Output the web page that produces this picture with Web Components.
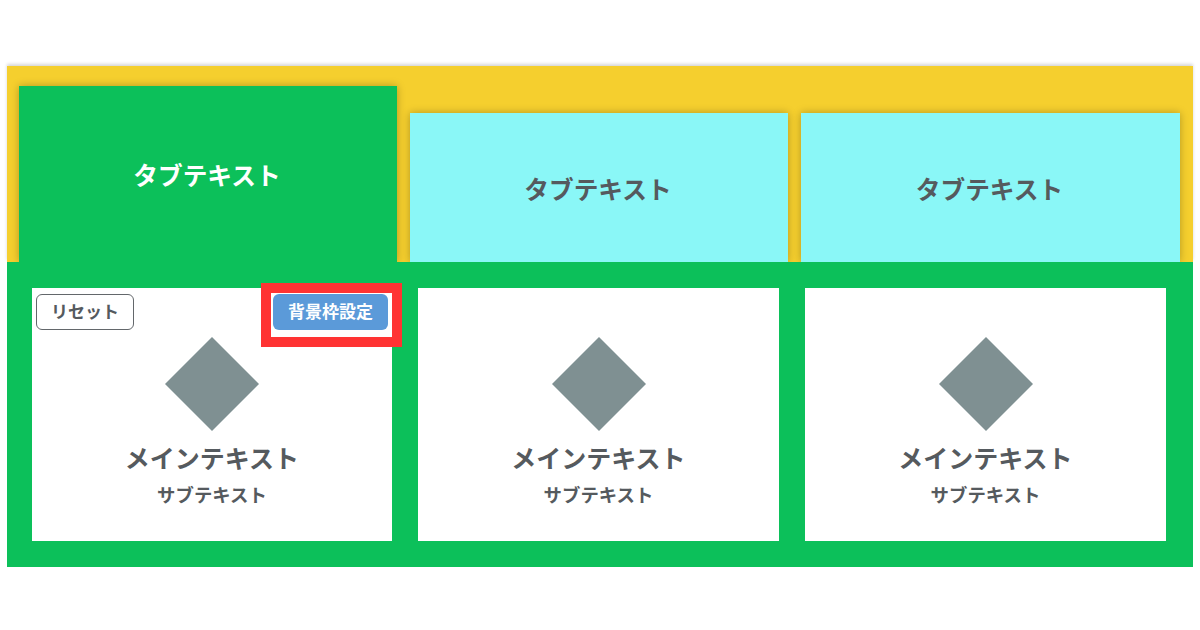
<!DOCTYPE html>
<html lang="ja">
<head>
<meta charset="utf-8">
<title>tabs</title>
<style>
  html, body { margin: 0; background: #fff; }
  body {
    padding: 66px 6.5px 0;
    font-family: "Noto Sans CJK JP", "Noto Sans", sans-serif;
    color: #555a5e;
  }
</style>
</head>
<body>
<tab-layout>
  <tab-item slot="tabs" active>タブテキスト</tab-item>
  <tab-item slot="tabs">タブテキスト</tab-item>
  <tab-item slot="tabs">タブテキスト</tab-item>
  <content-card main="メインテキスト" sub="サブテキスト" controls></content-card>
  <content-card main="メインテキスト" sub="サブテキスト"></content-card>
  <content-card main="メインテキスト" sub="サブテキスト"></content-card>
</tab-layout>

<script>
class TabLayout extends HTMLElement {
  connectedCallback() {
    if (this.shadowRoot) return;
    this.attachShadow({ mode: 'open' }).innerHTML = `
      <style>
        :host { display: block; width: 1186.5px; }
        .tabs {
          display: grid;
          grid-template-columns: 378px 378px 379px;
          column-gap: 13px;
          align-items: end;
          height: 196px;
          padding: 0 0 0 12.5px;
          background: #f5cf2e;
          box-shadow: 0 -2px 3px rgba(0, 0, 0, .16);
        }
        .panel {
          display: grid;
          grid-template-columns: 360px 361px 361px;
          column-gap: 26px;
          height: 253px;
          padding: 26px 25.5px;
          background: #0cc05a;
          position: relative;
        }
      </style>
      <div class="tabs"><slot name="tabs"></slot></div>
      <div class="panel"><slot></slot></div>
    `;
  }
}

class TabItem extends HTMLElement {
  connectedCallback() {
    if (this.shadowRoot) return;
    this.attachShadow({ mode: 'open' }).innerHTML = `
      <style>
        :host {
          display: flex;
          align-items: center;
          justify-content: center;
          box-sizing: border-box;
          height: 149px;
          padding-right: 2px;
          background: #8af7f7;
          color: #555a5e;
          font-size: 24.7px;
          font-weight: 700;
          box-shadow: 0 0 8px rgba(0, 0, 0, .27);
        }
        :host([active]) {
          height: 176px;
          background: #0cc05a;
          color: #fff;
        }
      </style>
      <slot></slot>
    `;
  }
}

class ContentCard extends HTMLElement {
  connectedCallback() {
    if (this.shadowRoot) return;
    const controls = this.hasAttribute('controls') ? `
      <button class="reset">リセット</button>
      <button class="bg">背景枠設定</button>
      <div class="mark"></div>` : '';
    this.attachShadow({ mode: 'open' }).innerHTML = `
      <style>
        :host {
          display: flex;
          flex-direction: column;
          align-items: center;
          position: relative;
          height: 253px;
          background: #fff;
          color: #555a5e;
          font-weight: 700;
        }
        .diamond { width: 94px; height: 94px; margin-top: 49px; flex: none; }
        .main { font-size: 25px; line-height: 36px; margin-top: 8px; }
        .sub { font-size: 18.4px; line-height: 26px; margin-top: 6px; }
        button {
          position: absolute;
          top: 6px;
          height: 36px;
          box-sizing: border-box;
          padding: 0 0 4px;
          border-radius: 6px;
          font: 700 17px/1 "Noto Sans CJK JP", sans-serif;
        }
        .reset { left: 4px; width: 98px; background: #fff; color: #555a5e; border: 1.5px solid #63676b; }
        .bg { left: 241px; width: 115px; background: #5b9ad9; color: #fff; border: 0; }
        .mark {
          position: absolute;
          left: 229px;
          top: -5px;
          width: 141px;
          height: 64px;
          box-sizing: border-box;
          border: 10px solid #ff3333;
        }
      </style>
      ${controls}
      <svg class="diamond" viewBox="0 0 94 94"><path d="M47 0 94 47 47 94 0 47Z" fill="#7f9092"/></svg>
      <div class="main">${this.getAttribute('main')}</div>
      <div class="sub">${this.getAttribute('sub')}</div>
    `;
  }
}

customElements.define('tab-layout', TabLayout);
customElements.define('tab-item', TabItem);
customElements.define('content-card', ContentCard);
</script>
</body>
</html>
